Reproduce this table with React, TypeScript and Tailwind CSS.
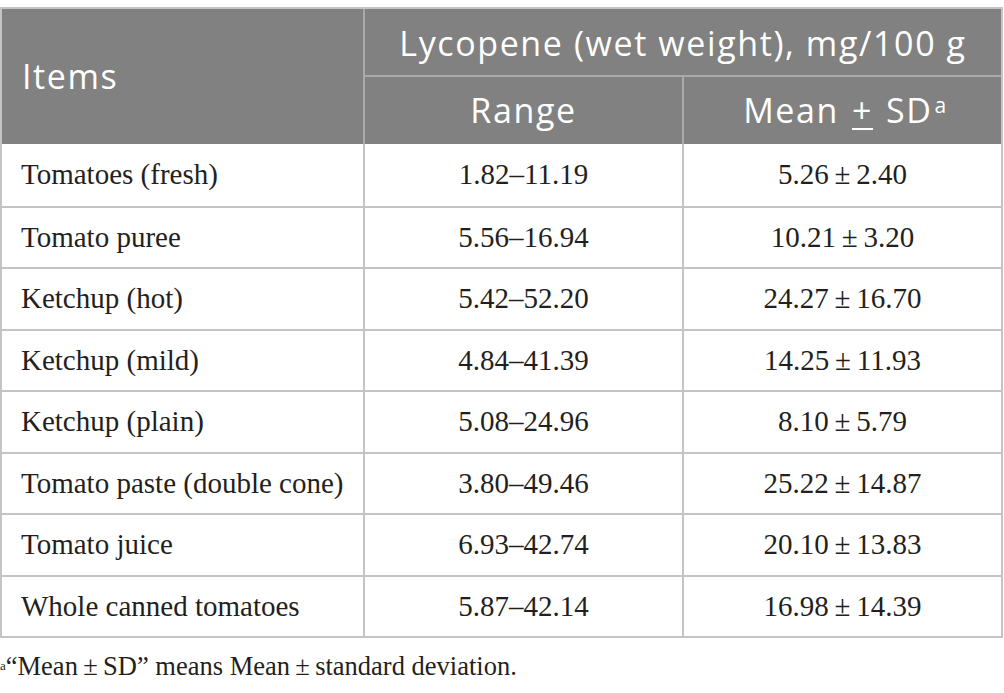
import React from "react";

const rows: [string, string, string][] = [
  ["Tomatoes (fresh)", "1.82–11.19", "5.26\u2009±\u20092.40"],
  ["Tomato puree", "5.56–16.94", "10.21\u2009±\u20093.20"],
  ["Ketchup (hot)", "5.42–52.20", "24.27\u2009±\u200916.70"],
  ["Ketchup (mild)", "4.84–41.39", "14.25\u2009±\u200911.93"],
  ["Ketchup (plain)", "5.08–24.96", "8.10\u2009±\u20095.79"],
  ["Tomato paste (double cone)", "3.80–49.46", "25.22\u2009±\u200914.87"],
  ["Tomato juice", "6.93–42.74", "20.10\u2009±\u200913.83"],
  ["Whole canned tomatoes", "5.87–42.14", "16.98\u2009±\u200914.39"],
];

export default function App() {
  const sans = { fontFamily: '"Open Sans", "Noto Sans", sans-serif' };
  const serif = { fontFamily: '"Liberation Serif", serif' };
  return (
    <div className="w-[1004px] h-[693px] bg-white pt-[7px]">
      <div className="w-[1003px] border-2 border-[#c4c4c4]">
        <div className="grid grid-cols-[363px_319px_1fr] bg-[#808180] text-white text-[34px] tracking-[1.6px]" style={sans}>
          <div className="row-span-2 flex items-center pl-[20px] border-r-2 border-[#a9a9a9]">Items</div>
          <div className="col-span-2 h-[68px] flex items-center justify-center border-b-2 border-[#a9a9a9] pt-[2px]">
            Lycopene (wet weight), mg/100 g
          </div>
          <div className="h-[67px] flex items-center justify-center border-r-2 border-[#a9a9a9]">Range</div>
          <div className="h-[67px] flex items-center justify-center pl-[6px]">
            Mean <span className="underline underline-offset-[5px] decoration-2 mx-[13px]">+</span>SD<sup className="text-[21px] relative top-[-6px] ml-[2px]">a</sup>
          </div>
        </div>
        {rows.map((r, i) => (
          <div
            key={i}
            className={`grid grid-cols-[363px_319px_1fr] h-[61.5px] text-[29px] text-[#231f20] ${i > 0 ? "border-t-2 border-[#c4c4c4]" : ""}`}
            style={serif}
          >
            <div className="flex items-center pl-[19px] border-r-2 border-[#c4c4c4]">{r[0]}</div>
            <div className="flex items-center justify-center border-r-2 border-[#c4c4c4]">{r[1]}</div>
            <div className="flex items-center justify-center">{r[2]}</div>
          </div>
        ))}
      </div>
      <div className="mt-[10px] text-[26.5px] leading-[36px] text-[#231f20]" style={serif}>
        <sup className="text-[13px] relative top-[-5px]">a</sup>“Mean{"\u2009±\u2009"}SD” means Mean{"\u2009±\u2009"}standard deviation.
      </div>
    </div>
  );
}
